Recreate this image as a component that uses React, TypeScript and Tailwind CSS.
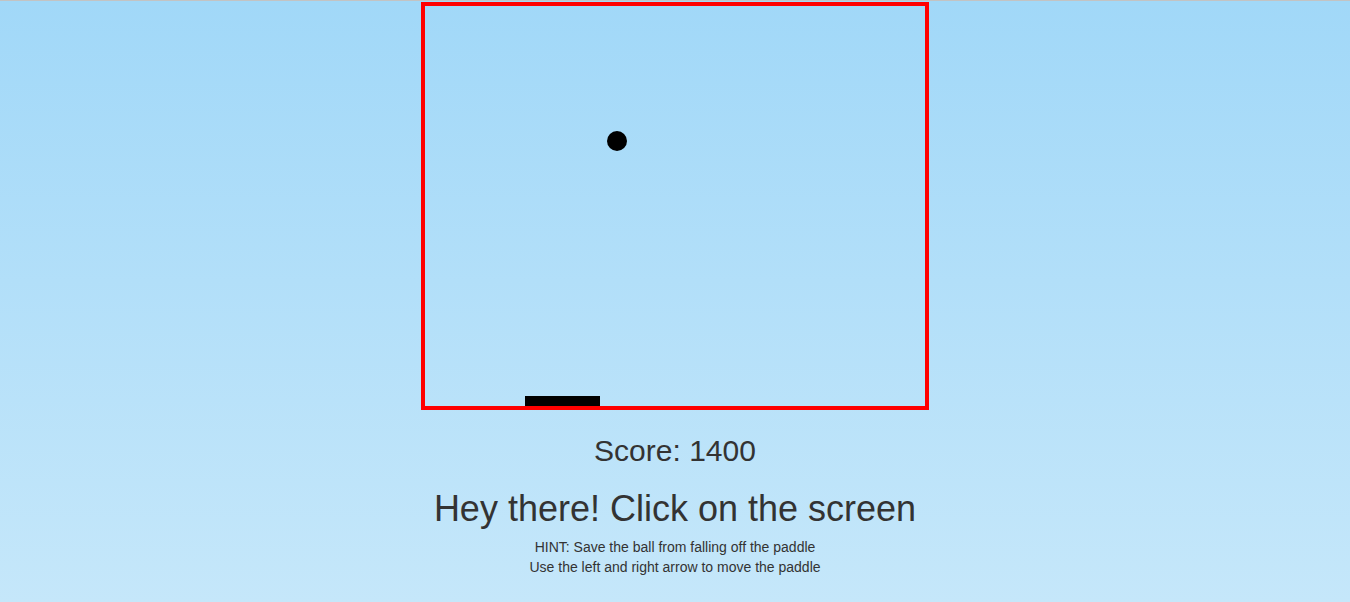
import React from 'react';

const HINTS = [
  'HINT: Save the ball from falling off the paddle',
  'Use the left and right arrow to move the paddle',
];

export default function App() {
  const score = 1400;
  const ball = { x: 192, y: 135, r: 10 };
  const paddle = { x: 100, w: 75, h: 10 };

  return (
    <div
      className="min-h-[602px] h-[602px] w-full overflow-hidden border-t border-[#c3c3c3] bg-gradient-to-b from-[#a1d8f8] to-[#c5e7fa] text-[#333333] flex flex-col items-center"
      style={{ fontFamily: '"Liberation Sans", Arial, sans-serif' }}
    >
      {/* game board */}
      <div className="relative mt-px w-[508px] h-[408px] shrink-0 border-4 border-[#ff0000]">
        <div
          className="absolute rounded-full bg-black"
          style={{ left: ball.x - ball.r, top: ball.y - ball.r, width: ball.r * 2, height: ball.r * 2 }}
        />
        <div
          className="absolute bottom-0 bg-black"
          style={{ left: paddle.x, width: paddle.w, height: paddle.h }}
        />
      </div>

      <p className="mt-[23px] text-[30px] leading-[36px]">Score: {score}</p>

      <h1 className="mt-[20px] text-[36px] leading-[40px]">Hey there! Click on the screen</h1>

      <div className="mt-[8px] flex flex-col items-center text-[14px] leading-[20px]">
        {HINTS.map((h) => (
          <p key={h}>{h}</p>
        ))}
      </div>
    </div>
  );
}
